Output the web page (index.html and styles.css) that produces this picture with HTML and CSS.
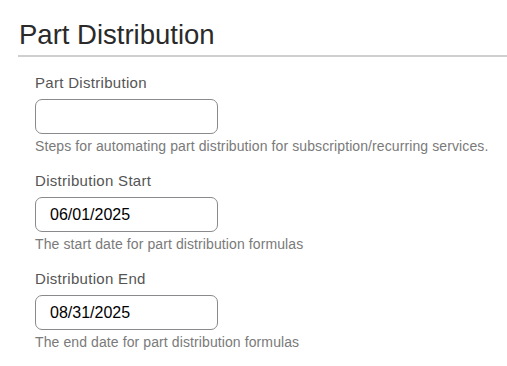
FILE: index.html
```html
<!DOCTYPE html>
<html>
<head>
<meta charset="utf-8">
<link rel="stylesheet" href="styles.css">
</head>
<body>
<div class="page">
  <h1 class="title">Part Distribution</h1>
  <div class="form">
    <div class="group">
      <label class="label">Part Distribution</label>
      <div class="input"></div>
      <div class="help">Steps for automating part distribution for subscription/recurring services.</div>
    </div>
    <div class="group">
      <label class="label">Distribution Start</label>
      <div class="input">06/01/2025</div>
      <div class="help">The start date for part distribution formulas</div>
    </div>
    <div class="group">
      <label class="label">Distribution End</label>
      <div class="input">08/31/2025</div>
      <div class="help">The end date for part distribution formulas</div>
    </div>
  </div>
</div>
</body>
</html>
```
FILE: styles.css
```css
html, body { margin: 0; padding: 0; background: #fff; }
.page { padding: 19px 0 0 18px; font-family: "Liberation Sans", Arial, sans-serif; }
.title {
  margin: 0;
  padding: 0 0 4px 1px;
  font-size: 27.5px;
  font-weight: 400;
  line-height: 32px;
  color: #2a2a2a;
  border-bottom: 2px solid #cfcfcf;
}
.form { padding: 16px 0 0 17px; display: flex; flex-direction: column; gap: 17px; }
.group { display: flex; flex-direction: column; }
.label { font-size: 15px; letter-spacing: 0.3px; line-height: 20px; color: #555; margin-bottom: 6px; }
.input {
  box-sizing: border-box;
  width: 183px; height: 35px;
  border: 1px solid #8a8a8e;
  border-radius: 7px;
  padding: 0 14px;
  font-size: 16px; line-height: 33px; color: #000;
}
.help { font-size: 14px; letter-spacing: 0.1px; line-height: 16px; color: #7a7a7a; margin-top: 4px; }
```
